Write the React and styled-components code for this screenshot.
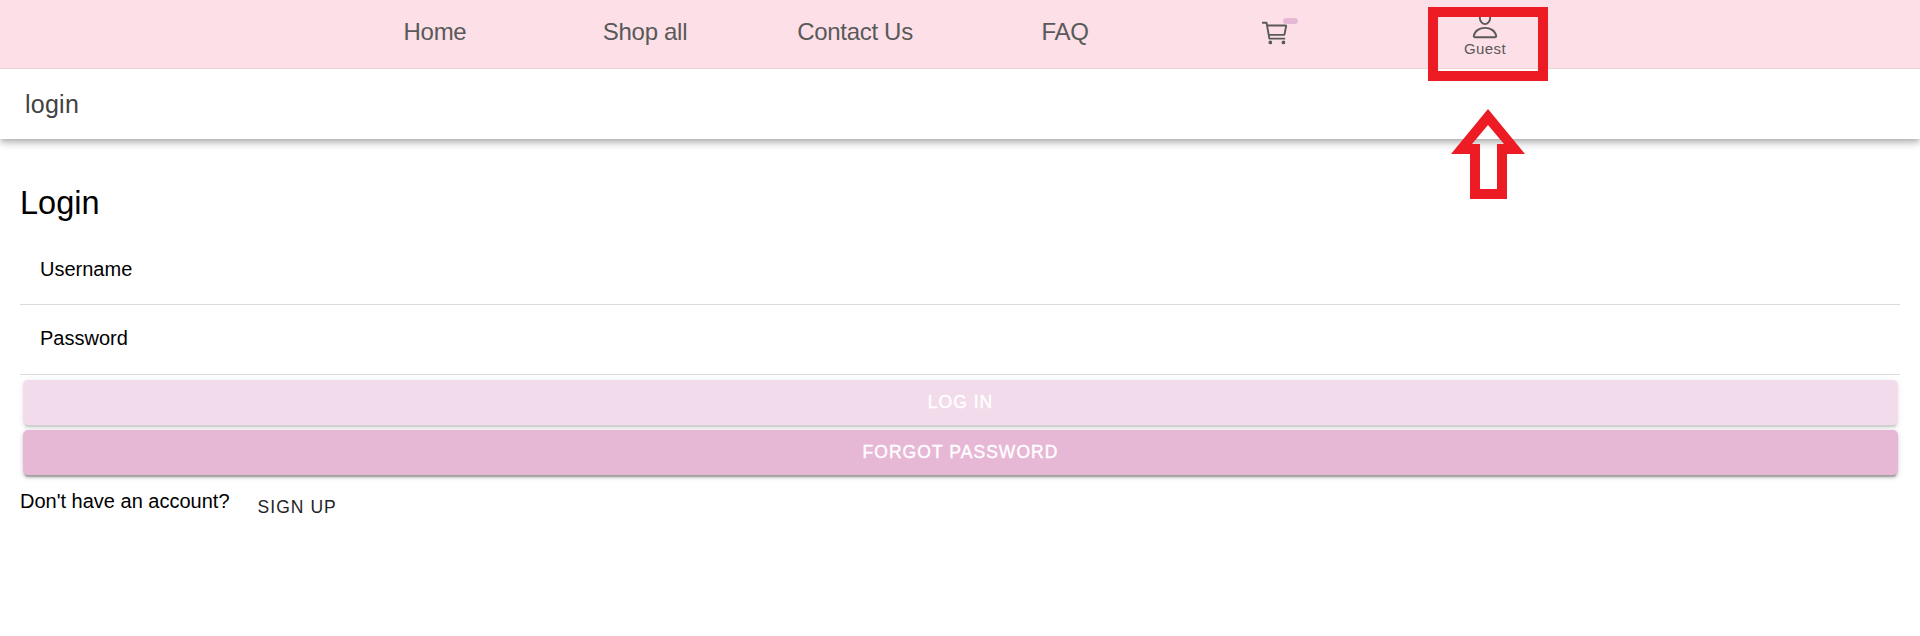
import React from "react";
import styled, { createGlobalStyle } from "styled-components";

const GlobalStyle = createGlobalStyle`
  *, *::before, *::after { box-sizing: border-box; }
  html, body, #root { height: 100%; }
  body {
    margin: 0;
    background: #fff;
    color: #000;
    font-family: "Liberation Sans", Arial, sans-serif;
    font-size: 20px;
    overflow: hidden;
  }
  button { font-family: inherit; border: 0; }
`;

const Page = styled.div`
  position: relative;
  height: 100%;
`;

const TabBar = styled.nav`
  position: relative;
  z-index: 1;
  display: flex;
  justify-content: center;
  height: 69px;
  background: #fde0e7;
  border-bottom: 1px solid #eccfd7;
  color: #595959;
`;

const Tab = styled.a`
  display: flex;
  flex-direction: column;
  align-items: center;
  width: 210px;
  padding-top: ${(p) => p.$top}px;
  font-size: 24px;
  line-height: 28px;
  letter-spacing: -0.3px;
  white-space: nowrap;
`;

const TabLabel = styled.span`
  font-size: 15px;
  line-height: 17px;
  letter-spacing: 0.4px;
`;

const IconWrap = styled.span`
  position: relative;
  display: block;
  width: 30px;
  height: 30px;
`;

const Icon = styled.svg`
  display: block;
  width: 30px;
  height: 30px;
  fill: none;
  stroke: currentColor;
  stroke-width: 32;
  stroke-linejoin: round;
`;

const Badge = styled.span`
  position: absolute;
  top: 0;
  left: 23px;
  width: 15px;
  height: 6px;
  border-radius: 3px;
  background: #e7b8d6;
`;

const TitleBar = styled.header`
  height: 70px;
  padding: 21px 25px 0;
  background: #fff;
  color: #424242;
  font-size: 25px;
  line-height: 29px;
  letter-spacing: 0.25px;
  box-shadow: 0 2.5px 5px -1.25px rgba(0, 0, 0, 0.2), 0 5px 6.25px rgba(0, 0, 0, 0.14),
    0 1.25px 12.5px rgba(0, 0, 0, 0.12);
`;

const Content = styled.main`
  padding: 45px 20px 0;
`;

const Heading = styled.h1`
  margin: 0 0 13px;
  font-size: 32.5px;
  font-weight: 400;
  line-height: 38px;
`;

const Field = styled.label`
  display: block;
  height: 70px;
  padding: ${(p) => p.$top}px 20px 0;
  border-bottom: 1px solid #dcdcdc;
  line-height: 24px;
`;

const SolidButton = styled.button`
  display: block;
  width: calc(100% - 5px);
  height: 45px;
  margin: 5px 2px 0 3px;
  padding: 0;
  border-radius: 5px;
  background: #e7b8d6;
  color: #fff;
  font-size: 17.5px;
  font-weight: 500;
  letter-spacing: 0.06em;
  -webkit-text-stroke: 0.4px #fff;
  opacity: ${(p) => (p.disabled ? 0.5 : 1)};
  box-shadow: 0 3.75px 1.25px -2.5px rgba(0, 0, 0, 0.2), 0 2.5px 2.5px rgba(0, 0, 0, 0.14),
    0 1.25px 6.25px rgba(0, 0, 0, 0.12);
`;

const SignUpRow = styled.div`
  display: flex;
  padding-top: 14px;
  line-height: 24px;
`;

const TextButton = styled.button`
  margin: 7px 0 0 28px;
  padding: 0;
  background: none;
  color: #222428;
  font-size: 17.5px;
  font-weight: 500;
  line-height: 22px;
  letter-spacing: 0.06em;
`;

const HighlightBox = styled.div`
  position: absolute;
  z-index: 2;
  left: 1428px;
  top: 7px;
  width: 120px;
  height: 74px;
  border: 10px solid #ed1c24;
`;

const HighlightArrow = styled.svg`
  position: absolute;
  z-index: 2;
  left: 1451px;
  top: 109px;
  width: 74px;
  height: 90px;
  fill: #ed1c24;
`;

function CartIcon() {
  return (
    <Icon viewBox="0 0 512 512">
      <circle cx="176" cy="416" r="16" fill="currentColor" />
      <circle cx="400" cy="416" r="16" fill="currentColor" />
      <path d="M48 80h64l48 272h256" strokeLinecap="round" />
      <path d="M160 288h249.44a8 8 0 008-6.43l28.8-144a8 8 0 00-8-9.57H128" strokeLinecap="round" />
    </Icon>
  );
}

function PersonIcon() {
  return (
    <Icon viewBox="0 0 512 512">
      <path d="M344 144c-3.92 52.87-44 96-88 96s-84.15-43.12-88-96c-4-55 35-96 88-96s92 42 88 96z" />
      <path d="M256 304c-87 0-175.3 48-191.64 138.6C62.39 453.52 68.57 464 80 464h352c11.44 0 17.62-10.48 15.65-21.4C431.3 352 343 304 256 304z" />
    </Icon>
  );
}

const links = ["Home", "Shop all", "Contact Us", "FAQ"];

export default function App() {
  return (
    <Page>
      <GlobalStyle />
      <TabBar>
        {links.map((label) => (
          <Tab key={label} $top={18}>{label}</Tab>
        ))}
        <Tab $top={18}>
          <IconWrap>
            <CartIcon />
            <Badge />
          </IconWrap>
        </Tab>
        <Tab $top={10}>
          <PersonIcon />
          <TabLabel>Guest</TabLabel>
        </Tab>
      </TabBar>
      <TitleBar>login</TitleBar>
      <Content>
        <Heading>Login</Heading>
        <Field $top={22}>Username</Field>
        <Field $top={21}>Password</Field>
        <SolidButton disabled>LOG IN</SolidButton>
        <SolidButton>FORGOT PASSWORD</SolidButton>
        <SignUpRow>
          <span>Don't have an account?</span>
          <TextButton>SIGN UP</TextButton>
        </SignUpRow>
      </Content>
      <HighlightBox />
      <HighlightArrow viewBox="0 0 74 90">
        <path
          fillRule="evenodd"
          d="M37 0L74 45H56V90H19V45H0ZM37 16L21 35H29V80H46V35H53Z"
        />
      </HighlightArrow>
    </Page>
  );
}
